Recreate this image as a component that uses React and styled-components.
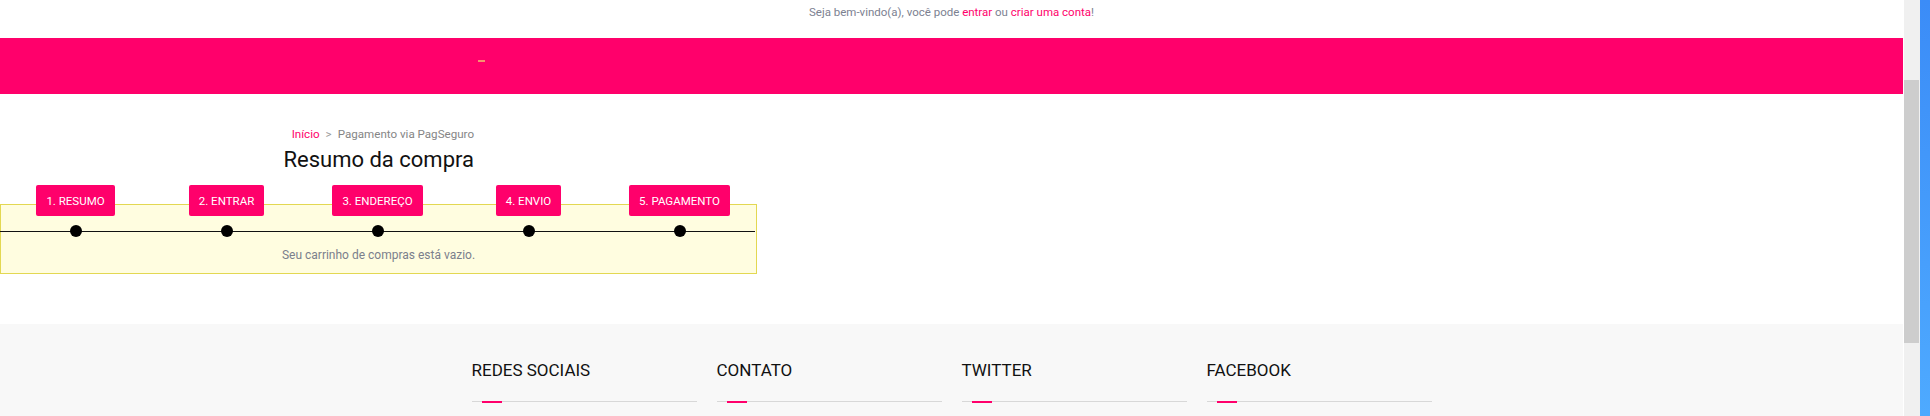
import React from "react";
import styled, { createGlobalStyle } from "styled-components";

const PINK = "#ff006b";

const GlobalStyle = createGlobalStyle`
  html, body { margin: 0; padding: 0; background: #fff; }
  body { font-family: Roboto, "Liberation Sans", Arial, sans-serif; color: #333; }
  * { box-sizing: border-box; }
`;

const Frame = styled.div`
  display: flex;
  height: 416px;
  overflow: hidden;
`;

const Page = styled.div`
  flex: 1;
  min-width: 0;
  display: flex;
  flex-direction: column;
`;

const TopBar = styled.div`
  height: 38px;
  display: flex;
  justify-content: center;
  padding-top: 5px;
  font-size: 11.5px;
  line-height: 14px;
  color: #7c8191;
`;

const PinkLink = styled.a`
  color: ${PINK};
  text-decoration: none;
`;

const NavBand = styled.div`
  height: 56px;
  background: ${PINK};
  padding: 22px 0 0 478px;
`;

const NavMark = styled.span`
  display: block;
  width: 7px;
  height: 2px;
  background: #f7916f;
`;

const Main = styled.main`
  padding-top: 32px;
  width: 757px;
`;

const Heading = styled.div`
  width: 474px;
  text-align: right;
`;

const Breadcrumb = styled.div`
  font-size: 11.6px;
  line-height: 16px;
  color: #858585;
`;

const Crumb = styled.a`
  color: ${PINK};
  text-decoration: none;
`;

const Sep = styled.span`
  margin: 0 6px;
  color: #999;
`;

const Title = styled.h1`
  margin: 5px 0 0;
  font-family: Roboto, "Open Sans", sans-serif;
  font-weight: 400;
  font-size: 22px;
  line-height: 26px;
  color: #111;
`;

const Panel = styled.section`
  margin-top: 31px;
  width: 757px;
  height: 70px;
  border: 1px solid #e3d852;
  background: #fffde0;
`;

const Steps = styled.ol`
  list-style: none;
  margin: -20px 0 0 -1px;
  padding: 0;
  display: grid;
  grid-template-columns: repeat(5, 151px);
`;

const Step = styled.li`
  display: flex;
  flex-direction: column;
  align-items: center;
`;

const StepButton = styled.span`
  height: 31px;
  padding: 0 10px;
  display: flex;
  align-items: center;
  background: ${PINK};
  border-radius: 2px;
  color: #fff;
  font-size: 11.5px;
  text-transform: uppercase;
  white-space: nowrap;
`;

const DotRow = styled.div`
  align-self: stretch;
  margin-top: 9px;
  height: 12px;
  display: flex;
  justify-content: center;
  background: linear-gradient(#111, #111) center / 100% 1px no-repeat;
`;

const Dot = styled.span`
  width: 12px;
  height: 12px;
  border-radius: 50%;
  background: #000;
`;

const Empty = styled.p`
  margin: 10px 0 0;
  text-align: center;
  font-size: 12px;
  line-height: 16px;
  color: #7b7f8c;
`;

const Footer = styled.footer`
  margin-top: 50px;
  flex: 1;
  background: #f8f8f8;
  padding-top: 36px;
`;

const FooterInner = styled.div`
  width: 980px;
  margin: 0 auto;
  display: grid;
  grid-template-columns: repeat(4, 1fr);
`;

const FooterCol = styled.div`
  padding: 0 10px;
`;

const FooterTitle = styled.h3`
  margin: 0;
  font-weight: 400;
  font-size: 17px;
  line-height: 20px;
  color: #111;
  text-transform: uppercase;
`;

const FooterRule = styled.div`
  position: relative;
  margin-top: 21px;
  height: 1px;
  background: #d8d8d8;
  &::before {
    content: "";
    position: absolute;
    left: 10px;
    top: 0;
    width: 20px;
    height: 2px;
    background: ${PINK};
  }
`;

const Scrollbar = styled.div`
  width: 17px;
  border-left: 1px solid #fff;
  background: #f0f0f0;
  padding-top: 80px;
`;

const Thumb = styled.div`
  width: 15px;
  height: 263px;
  background: #cdcdcd;
`;

const BlueEdge = styled.div`
  width: 10px;
  background: linear-gradient(#3b8cf7, #4eaaff);
`;

const steps = ["1. Resumo", "2. Entrar", "3. Endereço", "4. Envio", "5. Pagamento"];
const footerCols = ["Redes sociais", "Contato", "Twitter", "Facebook"];

export default function App() {
  return (
    <>
      <GlobalStyle />
      <Frame>
        <Page>
          <TopBar>
            <span>
              Seja bem-vindo(a), você pode <PinkLink href="#">entrar</PinkLink> ou{" "}
              <PinkLink href="#">criar uma conta</PinkLink>!
            </span>
          </TopBar>
          <NavBand>
            <NavMark />
          </NavBand>
          <Main>
            <Heading>
              <Breadcrumb>
                <Crumb href="#">Início</Crumb>
                <Sep>&gt;</Sep>
                Pagamento via PagSeguro
              </Breadcrumb>
              <Title>Resumo da compra</Title>
            </Heading>
            <Panel>
              <Steps>
                {steps.map((s) => (
                  <Step key={s}>
                    <StepButton>{s}</StepButton>
                    <DotRow>
                      <Dot />
                    </DotRow>
                  </Step>
                ))}
              </Steps>
              <Empty>Seu carrinho de compras está vazio.</Empty>
            </Panel>
          </Main>
          <Footer>
            <FooterInner>
              {footerCols.map((c) => (
                <FooterCol key={c}>
                  <FooterTitle>{c}</FooterTitle>
                  <FooterRule />
                </FooterCol>
              ))}
            </FooterInner>
          </Footer>
        </Page>
        <Scrollbar>
          <Thumb />
        </Scrollbar>
        <BlueEdge />
      </Frame>
    </>
  );
}
